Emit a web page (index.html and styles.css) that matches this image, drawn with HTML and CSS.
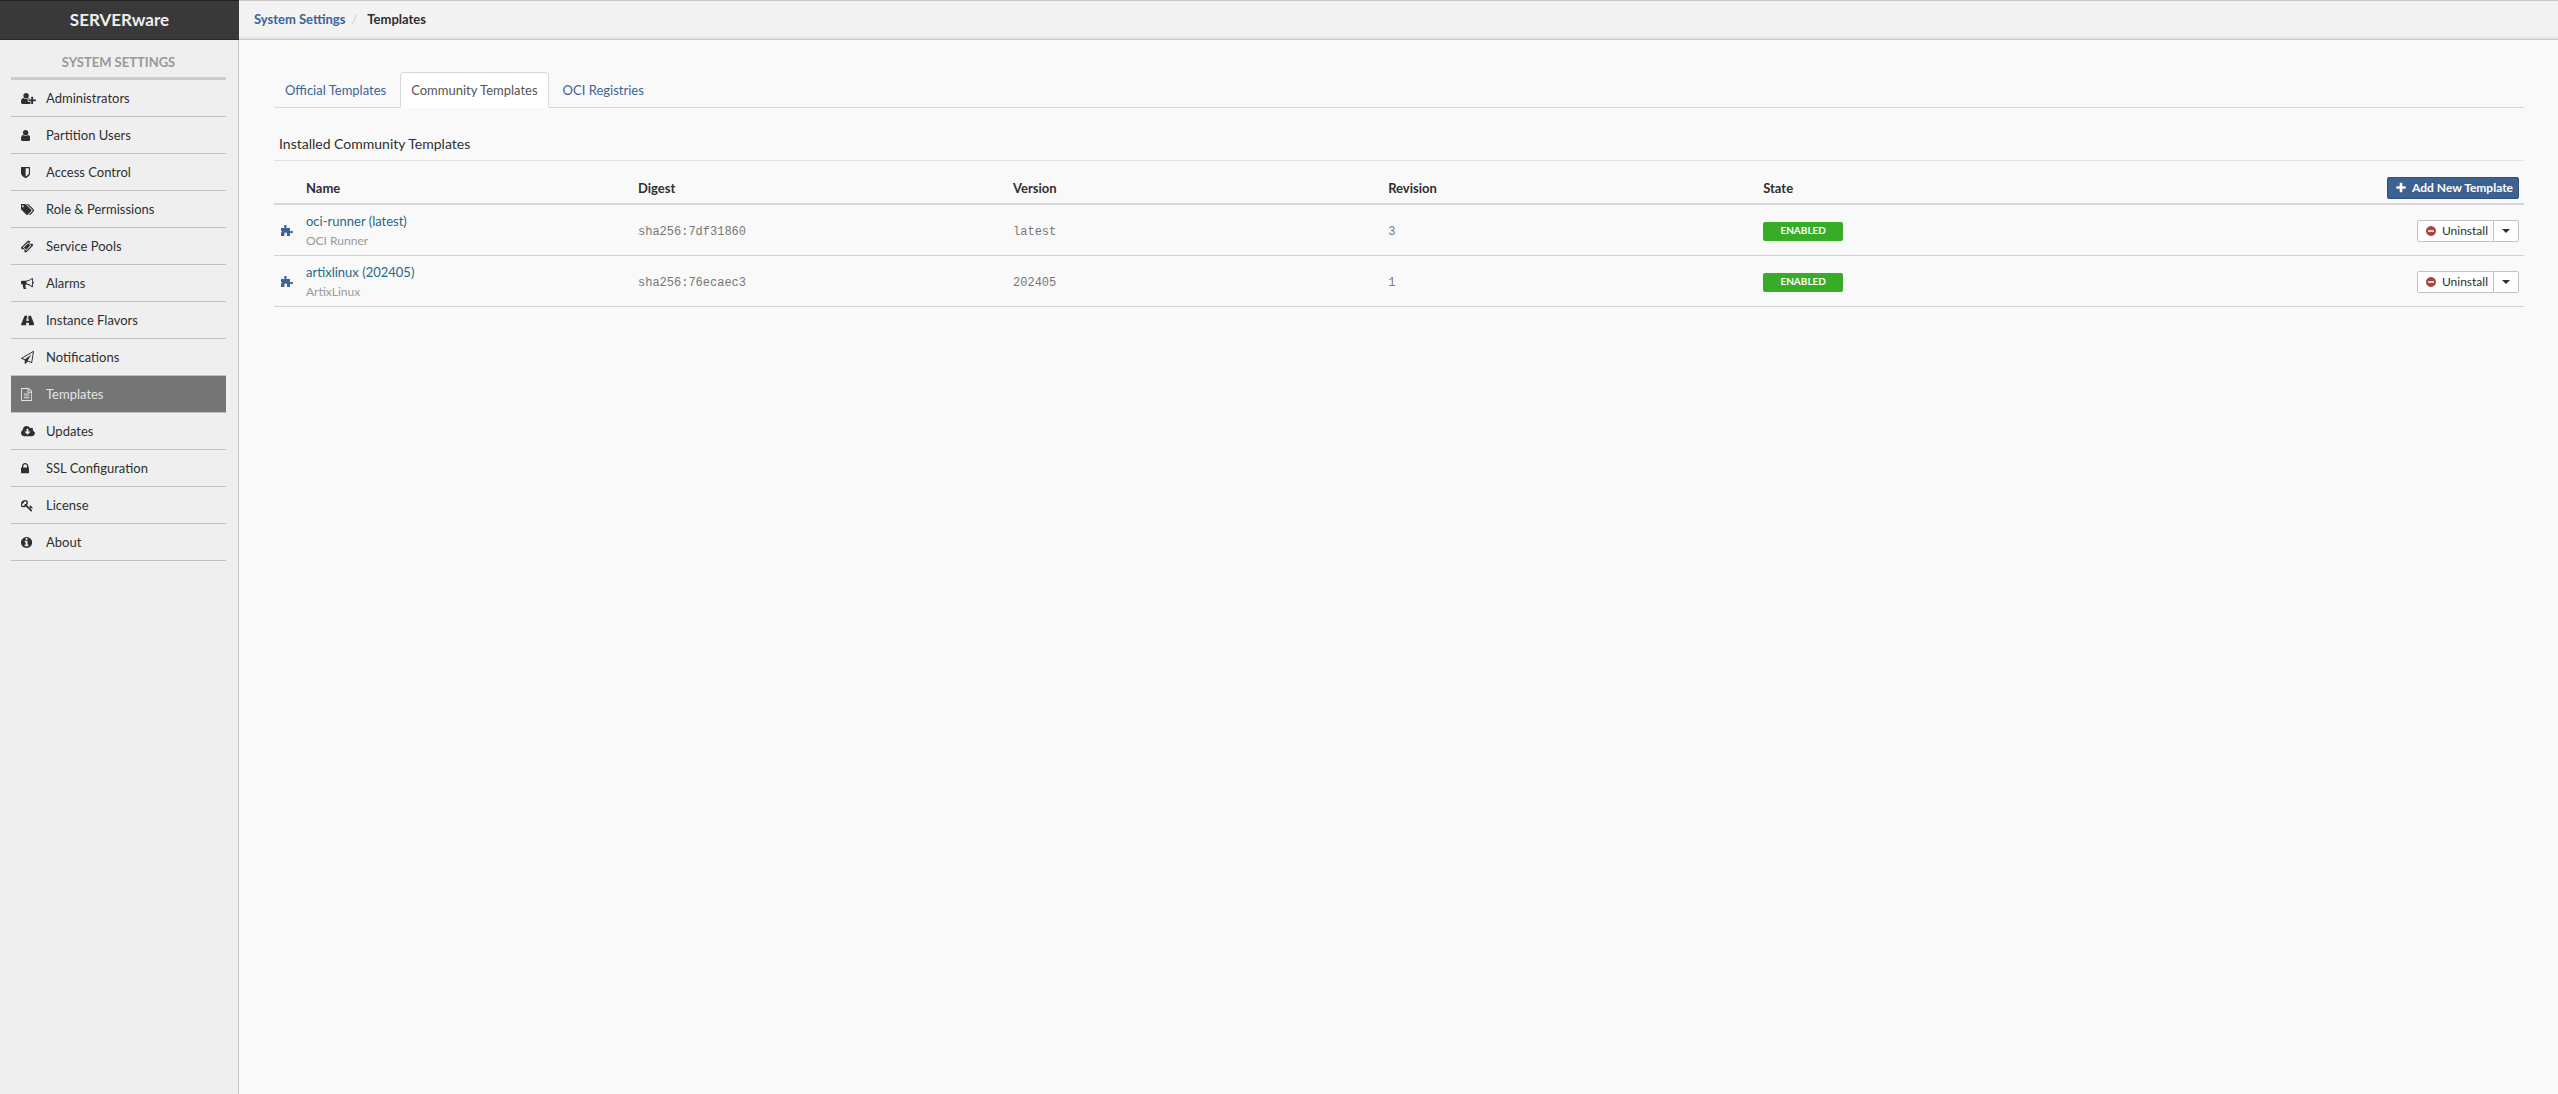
FILE: index.html
```html
<!DOCTYPE html>
<html lang="en">
<head>
<meta charset="utf-8">
<title>SERVERware - Templates</title>
<link rel="stylesheet" href="styles.css">
</head>
<body>
<svg class="sprite" aria-hidden="true">
  <symbol id="minus-circle" viewBox="128 0 1536 1792"><path d="M1344 960v-128q0-26-19-45t-45-19h-768q-26 0-45 19t-19 45v128q0 26 19 45t45 19h768q26 0 45-19t19-45zm320-64q0 209-103 385.500t-279.500 279.500-385.500 103-385.500-103-279.500-279.500-103-385.500 103-385.500 279.500-279.500 385.500-103 385.500 103 279.500 279.500 103 385.500z"/></symbol>
  <symbol id="puzzle" viewBox="0 0 12 12"><path d="M0 3h3.500V2Q3 1.500 3 1Q3.200 0 4.400 0T5.800 1Q5.800 1.500 5.400 2V3H9V6.200H9.700Q10.200 5.600 11 5.700Q12 6 12 7T11 8.300Q10.200 8.400 9.700 7.800H9V11H6V9Q6.200 7.600 4.700 7.600T3.300 9L3.600 11H0V7.500Q.9 7.400 .9 6.600T0 5.700z"/></symbol>
</svg>
<div class="app">
  <aside class="sidebar">
    <div class="brand">SERVERware</div>
    <nav class="menu">
      <h2 class="menu-title">SYSTEM SETTINGS</h2>
      <a class="item" href="#"><svg class="icon" viewBox="0 0 2048 1792"><path d="M704 896q-159 0-271.500-112.500t-112.500-271.500 112.500-271.500 271.500-112.500 271.500 112.500 112.500 271.500-112.500 271.500-271.500 112.500zm960 128h352q13 0 22.500 9.500t9.500 22.500v192q0 13-9.500 22.500t-22.500 9.500h-352v352q0 13-9.500 22.500t-22.500 9.500h-192q-13 0-22.500-9.500t-9.500-22.500v-352h-352q-13 0-22.500-9.500t-9.500-22.500v-192q0-13 9.500-22.500t22.500-9.500h352v-352q0-13 9.500-22.500t22.500-9.500h192q13 0 22.500 9.500t9.500 22.500v352zm-736 224q0 52 38 90t90 38h256v238q-68 50-171 50h-874q-121 0-194-69t-73-190q0-53 3.500-103.500t14-109 26.500-108.500 43-97.500 62-81 85.500-53.500 111.500-20q19 0 39 17 79 61 154.500 91.500t164.500 30.500 164.500-30.500 154.500-91.500q20-17 39-17 132 0 217 96h-223q-52 0-90 38t-38 90v192z"/></svg><span>Administrators</span></a>
      <a class="item" href="#"><svg class="icon" viewBox="256 0 1280 1792"><path d="M1536 1399q0 109-62.500 187t-150.500 78h-854q-88 0-150.500-78t-62.500-187q0-85 8.500-160.500t31.500-152 58.500-131 94-89 134.500-34.500q131 128 313 128t313-128q76 0 134.500 34.500t94 89 58.500 131 31.500 152 8.500 160.500zm-256-887q0 159-112.500 271.500t-271.500 112.500-271.500-112.500-112.500-271.500 112.500-271.500 271.500-112.500 271.500 112.500 112.500 271.500z"/></svg><span>Partition Users</span></a>
      <a class="item" href="#"><svg class="icon" viewBox="256 0 1280 1792"><path d="M1344 960v-640h-448v1137q119-63 213-137 235-184 235-360zm192-768v768q0 86-33.500 170.500t-83 150-118 127.500-126.500 103-121 77.500-89.500 49.500-42.500 20q-12 6-26 6t-26-6q-16-7-42.500-20t-89.500-49.500-121-77.500-126.500-103-118-127.500-83-150-33.500-170.500v-768q0-26 19-45t45-19h1152q26 0 45 19t19 45z"/></svg><span>Access Control</span></a>
      <a class="item" href="#"><svg class="icon" viewBox="0 0 1835 1792"><path d="M384 448q0-53-37.500-90.500t-90.500-37.500-90.500 37.500-37.500 90.500 37.500 90.500 90.500 37.500 90.500-37.500 37.500-90.500zm1067 576q0 53-37 90l-491 492q-39 37-91 37-53 0-90-37l-715-716q-38-37-64.500-101t-26.500-117v-416q0-52 38-90t90-38h416q53 0 117 26.500t102 64.500l715 714q37 39 37 91zm384 0q0 53-37 90l-491 492q-39 37-91 37-36 0-59-14t-53-45l470-470q37-37 37-90 0-52-37-91l-715-714q-38-38-102-64.500t-117-26.500h224q53 0 117 26.500t102 64.500l715 714q37 39 37 91z"/></svg><span>Role &amp; Permissions</span></a>
      <a class="item" href="#"><svg class="icon" viewBox="54 0 1684 1792"><path d="M1024 452l316 316-572 572-316-316zm-211 979l618-618q19-19 19-45t-19-45l-362-362q-18-18-45-18t-45 18l-618 618q-19 19-19 45t19 45l362 362q18 18 45 18t45-18zm889-637l-907 908q-37 37-90.500 37t-90.500-37l-126-126q56-56 56-136t-56-136-136-56-136 56l-125-126q-37-37-37-90.500t37-90.500l907-906q37-37 90.500-37t90.500 37l125 125q-56 56-56 136t56 136 136 56 136-56l126 125q37 37 37 90.500t-37 90.500z"/></svg><span>Service Pools</span></a>
      <a class="item" href="#"><svg class="icon" viewBox="0 0 1792 1792"><path d="M1664 640q53 0 90.500 37.500t37.500 90.500-37.500 90.500-90.500 37.500v384q0 52-38 90t-90 38q-417-347-812-380-58 19-91 66t-31 100.500 40 92.500q-20 33-23 65.500t6 58 33.500 55 48 50 61.500 50.500q-29 58-111.500 83t-168.500 11.500-132-55.500q-7-23-29.500-87.500t-32-94.500-23-89-15-101 3.500-98.500 22-110.500h-122q-66 0-113-47t-47-113v-192q0-66 47-113t113-47h480q435 0 896-384 52 0 90 38t38 90v384zm-128 604v-954q-394 302-768 343v270q377 42 768 341z"/></svg><span>Alarms</span></a>
      <a class="item" href="#"><svg class="icon" viewBox="64 128 1792 1792"><path d="M1111 1077v-4l-24-320q-1-13-11-22.500t-23-9.500h-186q-13 0-23 9.500t-11 22.500l-24 320v4q-1 12 8 20t21 8h244q12 0 21-8t8-20zm732 499q0 88-56 88h-654q13 0 22-9.500t8-22.500l-20-256q-1-13-11-22.500t-23-9.500h-298q-13 0-23 9.500t-11 22.500l-20 256q-1 13 8 22.500t22 9.500h-654q-56 0-56-88q0-45 31-101l417-1044q8-19 26-33t38-14h339q-13 0-23 9.500t-11 22.500l-15 192q-1 14 8 23t22 9h166q13 0 22-9t8-23l-15-192q-1-13-11-22.500t-23-9.500h339q20 0 38 14t26 33l417 1044q31 56 31 101z"/></svg><span>Instance Flavors</span></a>
      <a class="item" href="#"><svg class="icon" viewBox="0 0 1792 1792"><path d="M1764 11q33 24 27 64l-256 1536q-5 29-32 45-14 8-31 8-11 0-24-5l-527-215-298 327q-18 21-47 21-14 0-23-4-19-7-30-23.500t-11-36.500v-452l-472-193q-37-14-40-55-3-39 32-59l1664-960q35-21 68 2zm-342 1499l221-1323-1434 827 336 137 863-639-478 797z"/></svg><span>Notifications</span></a>
      <a class="item active" href="#" aria-current="page"><svg class="icon" viewBox="128 0 1536 1792"><path d="M1596 380q28 28 48 76t20 88v1152q0 40-28 68t-68 28h-1344q-40 0-68-28t-28-68v-1600q0-40 28-68t68-28h896q40 0 88 20t76 48zm-444-244v376h376q-10-29-22-41l-313-313q-12-12-41-22zm384 1528v-1024h-416q-40 0-68-28t-28-68v-416h-768v1536h1280zm-1024-864q0-14 9-23t23-9h704q14 0 23 9t9 23v64q0 14-9 23t-23 9h-704q-14 0-23-9t-9-23v-64zm736 224q14 0 23 9t9 23v64q0 14-9 23t-23 9h-704q-14 0-23-9t-9-23v-64q0-14 9-23t23-9h704zm0 256q14 0 23 9t9 23v64q0 14-9 23t-23 9h-704q-14 0-23-9t-9-23v-64q0-14 9-23t23-9h704z"/></svg><span>Templates</span></a>
      <a class="item" href="#"><svg class="icon" viewBox="0 0 1920 1792"><path d="M1280 928q0-14-9-23t-23-9h-224v-352q0-13-9.500-22.500t-22.500-9.500h-192q-13 0-22.500 9.500t-9.500 22.500v352h-224q-13 0-22.500 9.500t-9.500 22.500q0 14 9 23l352 352q9 9 23 9t23-9l351-351q10-12 10-24zm640 224q0 159-112.500 271.500t-271.500 112.500h-1088q-185 0-316.500-131.500t-131.500-316.500q0-130 70-240t188-165q-2-30-2-43 0-212 150-362t362-150q156 0 285.500 87t188.500 231q71-62 166-62 106 0 181 75t75 181q0 76-41 138 130 31 213.500 135.500t83.500 238.500z"/></svg><span>Updates</span></a>
      <a class="item" href="#"><svg class="icon" viewBox="320 0 1152 1792"><path d="M640 768h512v-192q0-106-75-181t-181-75-181 75-75 181v192zm832 96v576q0 40-28 68t-68 28h-960q-40 0-68-28t-28-68v-576q0-40 28-68t68-28h32v-192q0-184 132-316t316-132 316 132 132 316v192h32q40 0 68 28t28 68z"/></svg><span>SSL Configuration</span></a>
      <a class="item" href="#"><svg class="icon" viewBox="64 0 1664 1792"><path d="M832 512q0-80-56-136t-136-56-136 56-56 136q0 42 19 83-41-19-83-19-80 0-136 56t-56 136 56 136 136 56 136-56 56-136q0-42-19-83 41 19 83 19 80 0 136-56t56-136zm851 704q0 17-49 66t-66 49q-9 0-28.500-16t-36.500-33-38.500-40-24.500-26l-96 96 220 220q28 28 28 68 0 42-39 81t-81 39q-40 0-68-28l-671-671q-176 131-365 131-163 0-265.500-102.500t-102.500-265.500q0-160 95-313t248-248 313-95q163 0 265.500 102.500t102.500 265.500q0 189-131 365l355 355 96-96q-3-3-26-24.500t-40-38.500-33-36.500-16-28.500q0-17 49-66t66-49q13 0 23 10 6 6 46 44.500t82 79.500 86.500 86 73 78 28.500 41z"/></svg><span>License</span></a>
      <a class="item" href="#"><svg class="icon" viewBox="128 0 1536 1792"><path d="M1152 1376v-160q0-14-9-23t-23-9h-96v-512q0-14-9-23t-23-9h-320q-14 0-23 9t-9 23v160q0 14 9 23t23 9h96v320h-96q-14 0-23 9t-9 23v160q0 14 9 23t23 9h448q14 0 23-9t9-23zm-128-896v-160q0-14-9-23t-23-9h-192q-14 0-23 9t-9 23v160q0 14 9 23t23 9h192q14 0 23-9t9-23zm640 416q0 209-103 385.500t-279.500 279.500-385.500 103-385.500-103-279.500-279.500-103-385.500 103-385.500 279.500-279.500 385.500-103 385.500 103 279.500 279.500 103 385.500z"/></svg><span>About</span></a>
    </nav>
  </aside>
  <div class="content">
    <nav class="crumbs" aria-label="Breadcrumb"><a href="#">System Settings</a><span class="sep">/</span><span class="here">Templates</span></nav>
    <main class="page">
      <nav class="tabs">
        <a class="tab" href="#">Official Templates</a>
        <a class="tab current" href="#">Community Templates</a>
        <a class="tab" href="#">OCI Registries</a>
      </nav>
      <h1 class="heading">Installed Community Templates</h1>
      <table class="grid">
        <colgroup><col class="c-icon"><col class="c-name"><col class="c-data"><col class="c-data"><col class="c-data"><col><col class="c-data"></colgroup>
        <thead>
          <tr><th></th><th>Name</th><th>Digest</th><th>Version</th><th>Revision</th><th>State</th>
          <th class="right"><button class="btn primary" type="button"><svg class="plus" viewBox="192 0 1408 1792"><path d="M1600 736v192q0 40-28 68t-68 28h-416v416q0 40-28 68t-68 28h-192q-40 0-68-28t-28-68v-416h-416q-40 0-68-28t-28-68v-192q0-40 28-68t68-28h416v-416q0-40 28-68t68-28h192q40 0 68 28t28 68v416h416q40 0 68 28t28 68z"/></svg>Add New Template</button></th></tr>
        </thead>
        <tbody>
          <tr><td><svg class="puzzle"><use href="#puzzle"/></svg></td><td><a class="name" href="#">oci-runner (latest)</a><div class="sub">OCI Runner</div></td><td class="mono">sha256:7df31860</td><td class="mono">latest</td><td class="mono">3</td><td><span class="badge">ENABLED</span></td>
          <td><div class="group"><button class="btn" type="button"><svg class="minus"><use href="#minus-circle"/></svg>Uninstall</button><button class="btn drop" type="button" aria-label="More actions"><span class="caret"></span></button></div></td></tr>
          <tr><td><svg class="puzzle"><use href="#puzzle"/></svg></td><td><a class="name" href="#">artixlinux (202405)</a><div class="sub">ArtixLinux</div></td><td class="mono">sha256:76ecaec3</td><td class="mono">202405</td><td class="mono">1</td><td><span class="badge">ENABLED</span></td>
          <td><div class="group"><button class="btn" type="button"><svg class="minus"><use href="#minus-circle"/></svg>Uninstall</button><button class="btn drop" type="button" aria-label="More actions"><span class="caret"></span></button></div></td></tr>
        </tbody>
      </table>
    </main>
  </div>
</div>
</body>
</html>
```
FILE: styles.css
```css
* { box-sizing: border-box; }
body { margin: 0; background: #f9f9f9; color: #2f2f2f; font: 13px/20px Lato, "Liberation Sans", sans-serif; }
a { color: #3b6498; text-decoration: none; }
svg { fill: currentColor; }
.sprite { display: none; }
.app { display: flex; min-height: 100vh; }

.sidebar { flex: none; width: 239px; background: #efefef; border-right: 1px solid #c8c8c8; }
.brand { height: 40px; margin-right: -1px; background: #393939; border-top: 1px solid #222; border-bottom: 1px solid #2a2a2a; color: #eee; font-size: 17px; font-weight: 700; line-height: 38px; text-align: center; }
.menu { padding: 12px 12px 0 11px; }
.menu-title { margin: 0; padding-bottom: 5px; border-bottom: 3px solid #ccc; color: #999; font-size: 13px; font-weight: 700; line-height: 20px; text-align: center; }
.item { display: grid; grid-template-columns: 25px 1fr; align-items: center; height: 37px; padding-left: 10px; border-bottom: 1px solid #c2c2c2; color: #2f2f2f; }
.item.active { background: #757575; color: #e4e4e4; }
.icon { height: 13px; }

.content { flex: 1; min-width: 0; }
.crumbs { display: flex; height: 40px; padding-left: 15px; background: #f3f3f3; border-top: 1px solid #c8c8c8; border-bottom: 1px solid #c8c8c8; box-shadow: inset 0 -2px #e4e4e4; font-weight: 700; line-height: 37px; }
.sep { padding: 0 10px 0 6px; color: #ccc; font-weight: 400; }

.page { padding: 32px 34px 0 35px; }
.tabs { display: flex; gap: 3px; border-bottom: 1px solid #d8d8d8; }
.tab { height: 36px; margin-bottom: -1px; padding: 7px 10px; border: 1px solid transparent; border-radius: 4px 4px 0 0; }
.tab.current { background: #fff; border-color: #d8d8d8 #d8d8d8 #fff; color: #555; }
.heading { margin: 26px 0 0; padding: 0 5px 6px; border-bottom: 1px solid #e2e2e2; font-size: 14px; font-weight: 400; line-height: 20px; }

.grid { width: 100%; border-collapse: separate; border-spacing: 0; table-layout: fixed; }
.c-icon { width: 27px; }
.c-name { width: 332px; }
.c-data { width: 16.670%; }
.grid th { height: 44px; padding: 12px 5px 0; border-bottom: 2px solid #d6d6d6; font-weight: 700; text-align: left; }
.grid td { height: 51px; padding: 2px 5px 0; border-bottom: 1px solid #d2d2d2; }
.grid .right { text-align: right; }
.name { color: #2b6688; }
.sub { color: #999; font-size: 12px; }
.grid .mono { padding-top: 4px; color: #777; font-family: "Liberation Mono", monospace; font-size: 12px; }
.puzzle { display: block; width: 12px; height: 12px; margin-left: 2px; color: #3d6295; }
.badge { display: block; width: 80px; height: 19px; border-radius: 2px; background: #37ac27; color: #fff; font-size: 10px; font-weight: 700; line-height: 17px; text-align: center; }

.btn { display: inline-flex; align-items: center; gap: 6px; height: 22px; padding: 0 5px 0 8px; border: 1px solid #c2c2c2; border-radius: 2px; background: #fff; color: #2f2f2f; font: 12px/20px Lato, "Liberation Sans", sans-serif; }
.primary { border-color: #2f5182; background: #3d6291; color: #fff; font-weight: 700; }
.plus { width: 10px; height: 12px; }
.minus { width: 10px; height: 12px; color: #a94442; }
.group { display: flex; justify-content: flex-end; }
.group .btn:first-child { border-radius: 2px 0 0 2px; }
.group .drop { width: 26px; margin-left: -1px; padding: 0; justify-content: center; border-radius: 0 2px 2px 0; }
.caret { border: 4px solid transparent; border-top-color: #2f2f2f; border-bottom: 0; }
```
